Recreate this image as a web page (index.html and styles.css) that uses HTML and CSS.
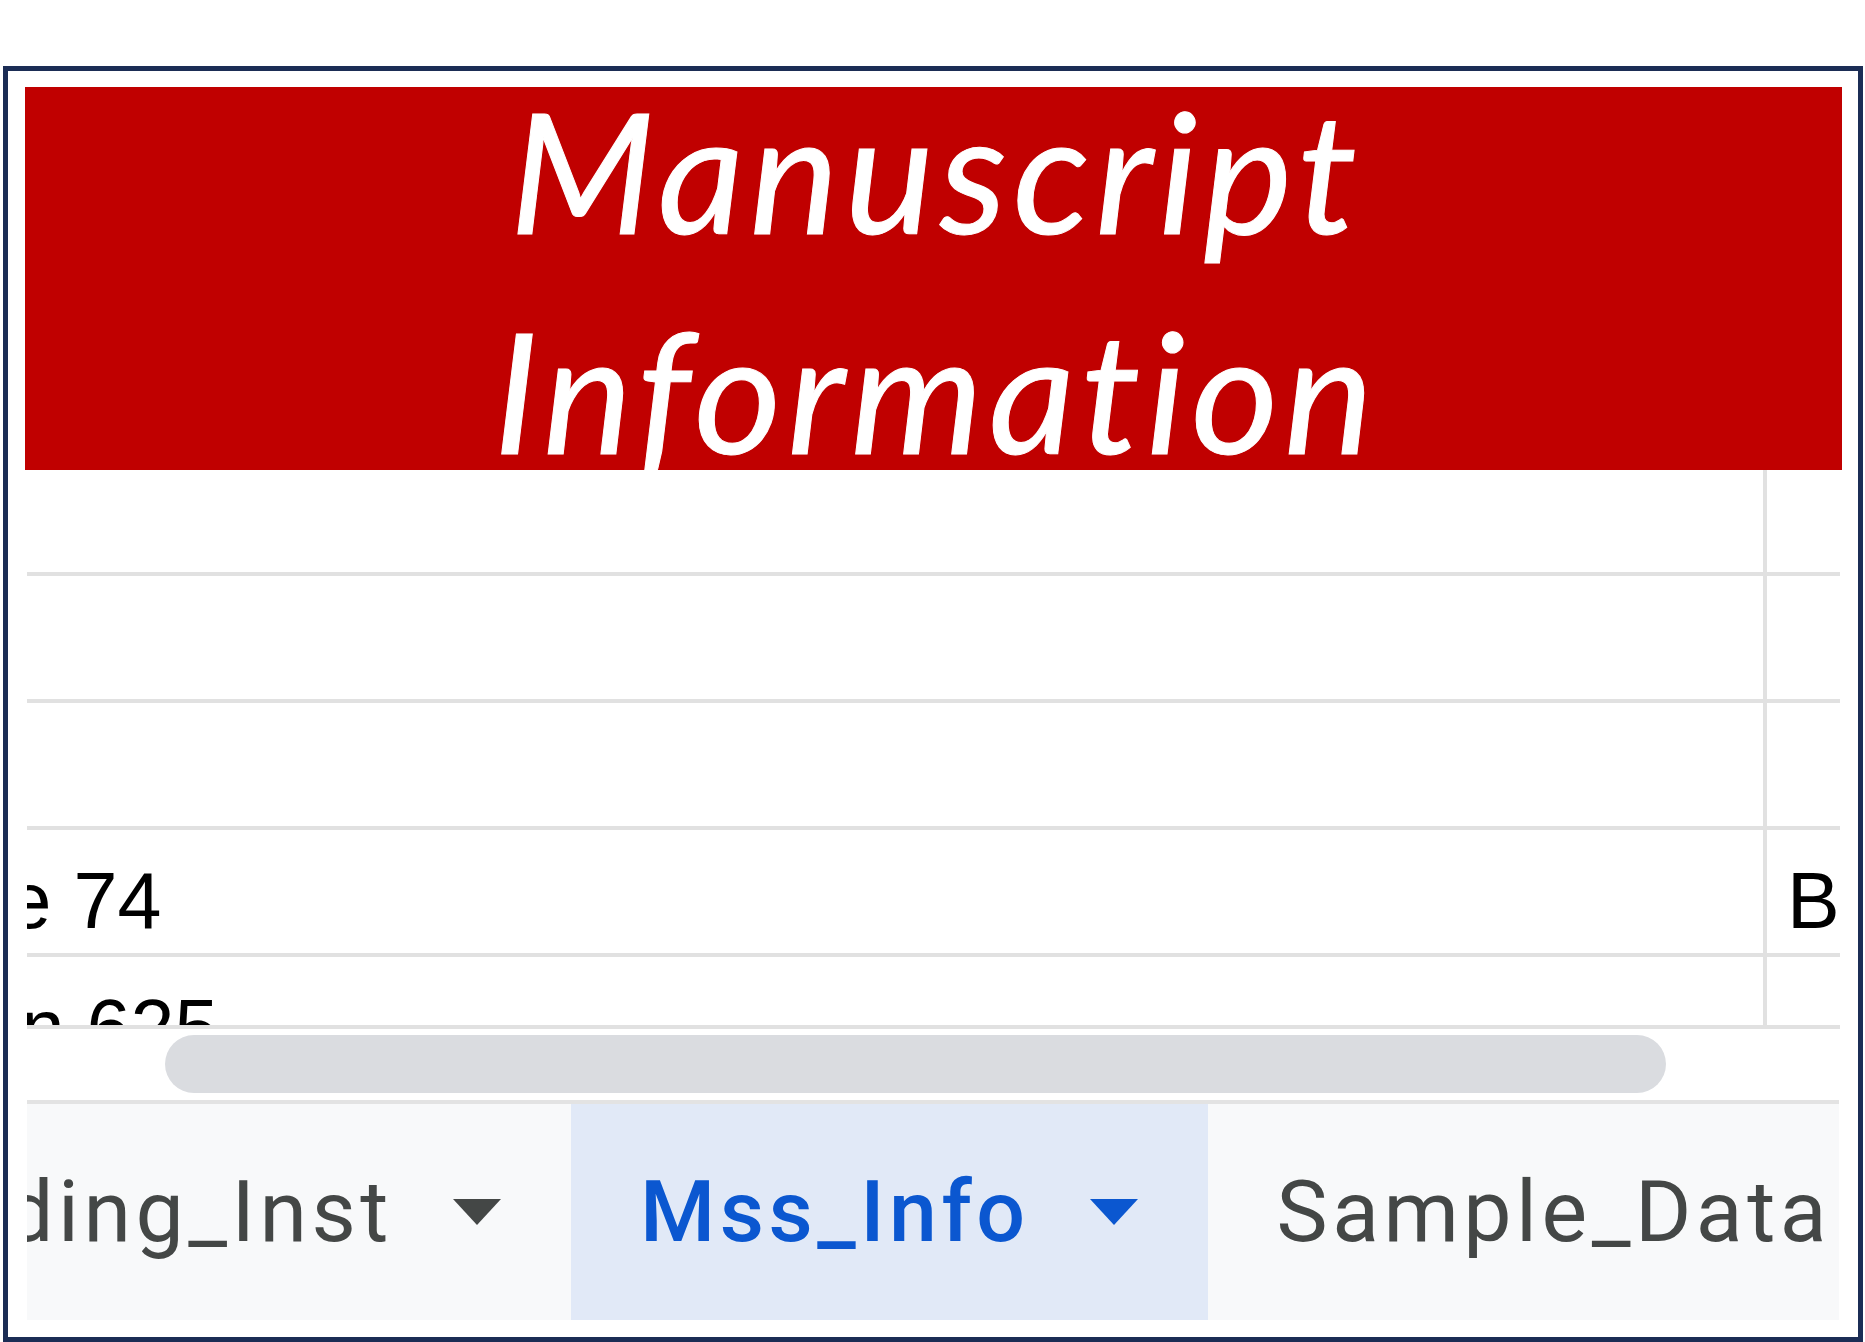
FILE: index.html
```html
<!DOCTYPE html>
<html lang="en">
<head>
<meta charset="utf-8">
<title>Mss_Info</title>
<link rel="stylesheet" href="styles.css">
</head>
<body>
<div class="frame">
  <div class="banner">
    <h1 class="banner-title">Manuscript<br>Information</h1>
  </div>
  <div class="sheet-viewport">
    <div class="sheet">
      <div class="row row-first"><div class="cell cell-a"></div><div class="cell cell-b"></div></div>
      <div class="row"><div class="cell cell-a"></div><div class="cell cell-b"></div></div>
      <div class="row"><div class="cell cell-a"></div><div class="cell cell-b"></div></div>
      <div class="row"><div class="cell cell-a">Page 74</div><div class="cell cell-b">B</div></div>
      <div class="row"><div class="cell cell-a">Mean 625</div><div class="cell cell-b"></div></div>
    </div>
  </div>
  <div class="hscroll">
    <div class="hscroll-thumb"></div>
  </div>
  <div class="tabbar">
    <div class="tabstrip">
      <div class="tab">
        <span class="tab-label">Coding_Inst</span>
        <svg class="tab-arrow" viewBox="0 0 50 27" aria-hidden="true"><polygon points="0,0 50,0 25,27"/></svg>
      </div>
      <div class="tab tab-active">
        <span class="tab-label">Mss_Info</span>
        <svg class="tab-arrow" viewBox="0 0 50 27" aria-hidden="true"><polygon points="0,0 50,0 25,27"/></svg>
      </div>
      <div class="tab">
        <span class="tab-label">Sample_Data</span>
        <svg class="tab-arrow" viewBox="0 0 50 27" aria-hidden="true"><polygon points="0,0 50,0 25,27"/></svg>
      </div>
    </div>
  </div>
</div>
</body>
</html>
```
FILE: styles.css
```css
html, body {
  margin: 0;
  padding: 0;
  background: #ffffff;
}

body {
  font-family: "Liberation Sans", Arial, sans-serif;
  overflow: hidden;
}

.frame {
  box-sizing: border-box;
  margin: 66px 2px 0 3px;
  width: 1860px;
  height: 1276px;
  border: 5px solid #1b2d55;
  padding: 16px 16px 17px 17px;
  display: flex;
  flex-direction: column;
  background: #ffffff;
}

.banner {
  height: 383px;
  flex: none;
  background: #c00000;
  display: flex;
  align-items: center;
  justify-content: center;
  overflow: hidden;
}

.banner-title {
  margin: 0;
  padding-left: 6px;
  font-family: "Lato", "Open Sans", sans-serif;
  font-style: italic;
  font-weight: 400;
  font-size: 168px;
  letter-spacing: 6px;
  line-height: 220px;
  color: #ffffff;
  -webkit-text-stroke: 1px #ffffff;
  text-align: center;
}

.sheet-viewport {
  flex: none;
  height: 555px;
  margin: 0 2px;
  border-bottom: 4px solid #e1e1e1;
  overflow: hidden;
}

.sheet {
  margin-left: -180px;
  width: 2100px;
}

.row {
  display: flex;
  height: 127px;
  box-sizing: border-box;
  border-bottom: 4px solid #e1e1e1;
}

.row-first {
  height: 106px;
}

.cell {
  box-sizing: border-box;
  display: flex;
  align-items: flex-end;
  padding: 0 0 6px 20px;
  font-size: 79px;
  line-height: 92px;
  color: #000000;
  white-space: nowrap;
  overflow: hidden;
}

.cell-a {
  width: 1920px;
  flex: none;
  border-right: 4px solid #e1e1e1;
}

.cell-b {
  flex: 1;
}

.hscroll {
  flex: none;
  height: 71px;
  margin: 0 2px;
  box-sizing: border-box;
  padding: 6px 0 0 138px;
}

.hscroll-thumb {
  width: 1501px;
  height: 58px;
  border-radius: 29px;
  background: #dadce0;
}

.tabbar {
  flex: none;
  height: 216px;
  margin: 0 3px 0 2px;
  border-top: 4px solid #e3e3e3;
  background: #f8f9fa;
  overflow: hidden;
}

.tabstrip {
  display: flex;
  height: 100%;
  margin-left: -205px;
}

.tab {
  flex: none;
  display: flex;
  align-items: center;
  gap: 60px;
  padding: 0 70px 0 69px;
  font-family: "Roboto", "Liberation Sans", sans-serif;
  font-size: 86px;
  letter-spacing: 4.5px;
  font-weight: 400;
  color: #444746;
}

.tab-label {
  line-height: 1;
  white-space: nowrap;
}

.tab-arrow {
  width: 48px;
  height: 26px;
  fill: #444746;
  flex: none;
}

.tab-active {
  background: #e1e9f7;
  color: #0b57d0;
  font-weight: 500;
}

.tab-active .tab-arrow {
  fill: #0b57d0;
}
```
